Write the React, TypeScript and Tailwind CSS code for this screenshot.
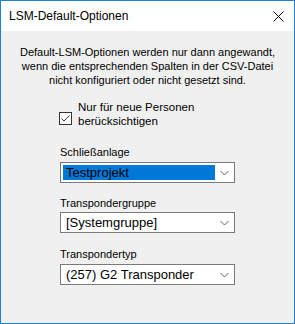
import React from 'react';

const font = { fontFamily: '"Liberation Sans", Arial, sans-serif' };

function Chevron() {
  return (
    <svg width="9" height="6" viewBox="0 0 9 6" className="shrink-0">
      <path d="M0.5 1 L4.5 5 L8.5 1" fill="none" stroke="#606060" strokeWidth="1" />
    </svg>
  );
}

function Combo({ value, selected }: { value: string; selected?: boolean }) {
  return (
    <div className="flex h-[21px] w-[175px] items-center border border-[#7a7a7a] bg-white pl-[2px] pr-[5px] text-[13px]">
      {selected ? (
        <div className="flex h-[15px] w-[152px] items-center bg-[#0078d7] pl-[3px] text-black">
          {value}
        </div>
      ) : (
        <div className="w-[152px] pl-[3px] text-black">{value}</div>
      )}
      <div className="flex flex-1 justify-end">
        <Chevron />
      </div>
    </div>
  );
}

export default function App() {
  return (
    <div
      className="flex h-[324px] w-[295px] flex-col border border-[#1883d7] text-[11px] text-black"
      style={font}
    >
      {/* Title bar */}
      <div className="flex h-[30px] shrink-0 items-center justify-between bg-white pl-[8px] pr-[10px]">
        <span className="text-[12px] text-black">LSM-Default-Optionen</span>
        <svg width="11" height="11" viewBox="0 0 11 11">
          <path d="M0.5 0.5 L10.5 10.5 M10.5 0.5 L0.5 10.5" stroke="#000" strokeWidth="1" />
        </svg>
      </div>

      {/* Body */}
      <div className="flex flex-1 flex-col bg-[#f0f0f0]">
        <p className="mt-[14px] text-center leading-[14px]">
          Default-LSM-Optionen werden nur dann angewandt,
          <br />
          wenn die entsprechenden Spalten in der CSV-Datei
          <br />
          nicht konfiguriert oder nicht gesetzt sind.
        </p>

        <div className="ml-[58px] mt-[13px] flex items-start gap-[6px]">
          <div className="mt-[12px] flex h-[13px] w-[13px] items-center justify-center border border-[#333] bg-white">
            <svg width="9" height="7" viewBox="0 0 9 7">
              <path d="M0.5 3.5 L3 6 L8.5 0.5" fill="none" stroke="#333" strokeWidth="1" />
            </svg>
          </div>
          <div className="text-[11.5px] leading-[14px]">
            Nur für neue Personen
            <br />
            berücksichtigen
          </div>
        </div>

        <div className="ml-[59px] mt-[17px] flex flex-col">
          <span className="leading-[14px]">Schließanlage</span>
          <div className="mt-[3px]">
            <Combo value="Testprojekt" selected />
          </div>

          <span className="mt-[13px] leading-[14px]">Transpondergruppe</span>
          <div className="mt-[2px]">
            <Combo value="[Systemgruppe]" />
          </div>

          <span className="mt-[14px] leading-[14px]">Transpondertyp</span>
          <div className="mt-[3px]">
            <Combo value="(257) G2 Transponder" />
          </div>
        </div>
      </div>
    </div>
  );
}
